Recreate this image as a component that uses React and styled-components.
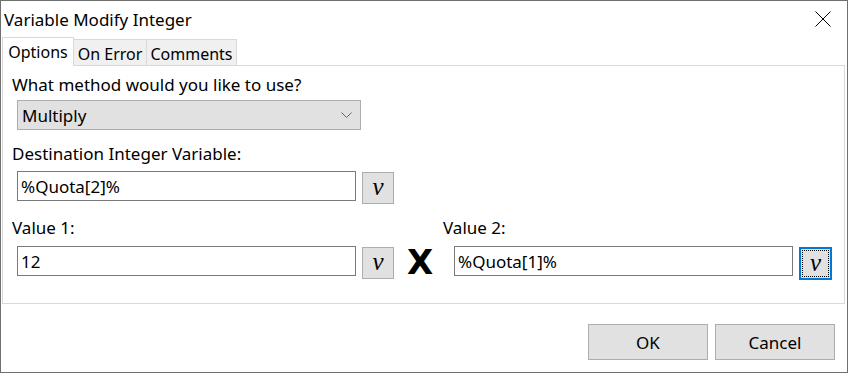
import React from 'react'
import styled, { createGlobalStyle } from 'styled-components'

const Global = createGlobalStyle`
  html, body {
    margin: 0;
    background: #fff;
  }
  body {
    font-family: "Noto Sans", "Open Sans", sans-serif;
    font-size: 17px;
    color: #000;
  }
`

const Dialog = styled.div`
  width: 848px;
  height: 373px;
  box-sizing: border-box;
  border: 1px solid #707070;
  background: #fff;
  display: flex;
  flex-direction: column;
`

const TitleBar = styled.div`
  height: 36px;
  display: flex;
  align-items: center;
  justify-content: space-between;
  padding-left: 3px;
  padding-right: 16px;
`

const Title = styled.span`
  font-size: 17px;
`

const TabStrip = styled.div`
  height: 28px;
  display: flex;
  align-items: flex-end;
  padding-left: 1px;
`

const Tab = styled.div`
  box-sizing: border-box;
  width: ${p => p.w}px;
  height: ${p => (p.active ? 29 : 26)}px;
  margin-left: ${p => (p.first ? 0 : -1)}px;
  margin-bottom: ${p => (p.active ? -1 : 0)}px;
  border: 1px solid #d9d9d9;
  border-bottom: none;
  background: ${p => (p.active ? '#fff' : '#f0f0f0')};
  position: relative;
  z-index: ${p => (p.active ? 2 : 1)};
  display: flex;
  align-items: center;
  justify-content: center;
  font-size: 16px;
  padding-top: ${p => (p.active ? 0 : 2)}px;
`

const Panel = styled.div`
  box-sizing: border-box;
  height: 239px;
  margin: 0 2px 0 1px;
  border: 1px solid #d9d9d9;
  padding: 8px 0 0 9px;
  display: flex;
  flex-direction: column;
`

const Label = styled.div`
  height: 22px;
  line-height: 22px;
  margin-top: ${p => p.mt || 0}px;
`

const LabelRow = styled.div`
  display: grid;
  grid-template-columns: 431px auto;
  margin-top: 13px;
  height: 22px;
  line-height: 22px;
`

const Select = styled.div`
  box-sizing: border-box;
  width: 344px;
  height: 30px;
  margin: 4px 0 0 5px;
  border: 1px solid #adadad;
  background: #e1e1e1;
  display: flex;
  align-items: center;
  justify-content: space-between;
  padding: 0 8px 0 4px;
`

const FieldRow = styled.div`
  display: flex;
  align-items: flex-start;
  margin: ${p => p.mt}px 0 0 5px;
  height: 33px;
`

const TextBox = styled.input`
  box-sizing: border-box;
  width: 339px;
  height: 30px;
  margin: 0;
  border: 1px solid #7a7a7a;
  padding: 0 0 0 3px;
  font: inherit;
  color: #000;
  background: #fff;
  outline: none;
  margin-left: ${p => p.ml || 0}px;
`

const VarButton = styled.button`
  box-sizing: border-box;
  width: ${p => (p.focused ? 33 : 32)}px;
  height: ${p => (p.focused ? 33 : 32)}px;
  margin: 1px 0 0 6px;
  padding: 0 0 3px;
  background: #e1e1e1;
  border: ${p => (p.focused ? '2px solid #0078d7' : '1px solid #adadad')};
  outline: ${p => (p.focused ? '1px dotted #000' : 'none')};
  outline-offset: -4px;
  font-family: "Liberation Serif", "Times New Roman", serif;
  font-style: italic;
  font-size: 25px;
  line-height: 1;
  color: #000;
  display: flex;
  align-items: center;
  justify-content: center;
`

const Times = styled.span`
  font-family: "DejaVu Sans", sans-serif;
  font-weight: bold;
  font-size: 34px;
  line-height: 33px;
  width: 26px;
  margin-left: 13px;
  text-align: center;
`

const Footer = styled.div`
  flex: 1;
  display: flex;
  justify-content: flex-end;
  align-items: flex-start;
  gap: 7px;
  padding: 20px 12px 0 0;
`

const DialogButton = styled.button`
  box-sizing: border-box;
  width: 120px;
  height: 36px;
  background: #e1e1e1;
  border: 1px solid #adadad;
  font: inherit;
  color: #000;
  padding: 0;
`

function CloseIcon() {
  return (
    <svg width="16" height="16" viewBox="0 0 16 16">
      <path d="M0.5 0.5 L15.5 15.5 M15.5 0.5 L0.5 15.5" stroke="#000" strokeWidth="1" />
    </svg>
  )
}

function Chevron() {
  return (
    <svg width="11" height="6" viewBox="0 0 11 6">
      <path d="M0.5 0.5 L5.5 5.5 L10.5 0.5" fill="none" stroke="#666" strokeWidth="1" />
    </svg>
  )
}

export default function App() {
  return (
    <>
      <Global />
      <Dialog>
        <TitleBar>
          <Title>Variable Modify Integer</Title>
          <CloseIcon />
        </TitleBar>
        <TabStrip>
          <Tab first active w={72}>Options</Tab>
          <Tab w={74}>On Error</Tab>
          <Tab w={91}>Comments</Tab>
        </TabStrip>
        <Panel>
          <Label>What method would you like to use?</Label>
          <Select>
            <span>Multiply</span>
            <Chevron />
          </Select>
          <Label mt={13}>Destination Integer Variable:</Label>
          <FieldRow mt={6}>
            <TextBox readOnly value="%Quota[2]%" />
            <VarButton>v</VarButton>
          </FieldRow>
          <LabelRow>
            <span>Value 1:</span>
            <span>Value 2:</span>
          </LabelRow>
          <FieldRow mt={7}>
            <TextBox readOnly value="12" />
            <VarButton>v</VarButton>
            <Times>X</Times>
            <TextBox readOnly value="%Quota[1]%" ml={21} />
            <VarButton focused>v</VarButton>
          </FieldRow>
        </Panel>
        <Footer>
          <DialogButton>OK</DialogButton>
          <DialogButton>Cancel</DialogButton>
        </Footer>
      </Dialog>
    </>
  )
}
